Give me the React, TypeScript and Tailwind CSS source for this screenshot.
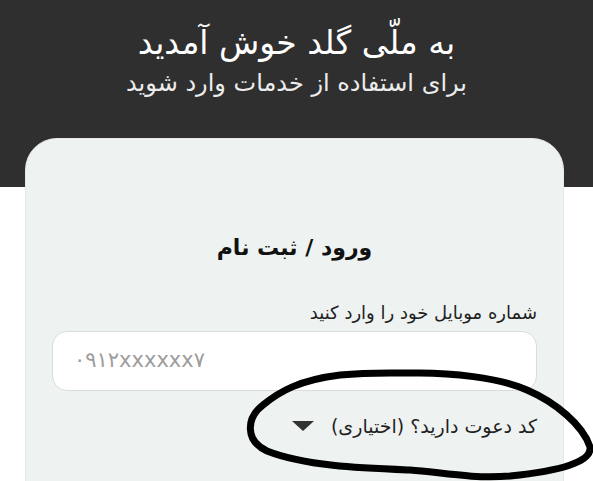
export default function App() {
  return (
    <div
      className="relative h-screen w-full overflow-hidden bg-white"
      style={{ fontFamily: '"DejaVu Sans", sans-serif' }}
    >
      {/* header */}
      <div className="flex h-[187px] flex-col items-center bg-[#2f2f2f] pt-[21px] text-center" dir="rtl">
        <h1 className="text-[33px] leading-[44px] text-white">به ملّی گلد خوش آمدید</h1>
        <p className="mt-[2px] text-[24px] leading-[32px] text-[#ececec]">برای استفاده از خدمات وارد شوید</p>
      </div>

      {/* card */}
      <div
        className="relative ml-[25px] -mt-[49px] h-[400px] w-[539px] rounded-[32px] border border-[#e4e8e7] bg-[#eef2f1] px-[26px] pt-[92px]"
        dir="rtl"
      >
        <h2 className="text-center text-[22px] font-bold leading-[34px] text-[#111]">ورود / ثبت نام</h2>

        <label className="mt-[35px] block text-[18px] leading-[26px] text-[#1f1f1f]">
          شماره موبایل خود را وارد کنید
        </label>
        <div className="mt-[5px] flex h-[60px] items-center rounded-[15px] border border-[#d9dcdc] bg-white px-[21px]">
          <input
            dir="ltr"
            placeholder="۰۹۱۲xxxxxx۷"
            className="w-full bg-transparent text-left text-[21px] text-[#333] outline-none placeholder:text-[#9d9d9d]"
          />
        </div>

        <button className="mt-[21px] flex items-center gap-[16px] text-[19px] leading-[28px] text-[#1f1f1f]">
          <span>کد دعوت دارید؟ (اختیاری)</span>
          <svg width="24" height="11" viewBox="0 0 24 11">
            <path d="M1 0 H23 L12 10 Z" fill="#333" />
          </svg>
        </button>
      </div>

      {/* hand-drawn annotation */}
      <svg
        className="pointer-events-none absolute left-0 top-0"
        width="593"
        height="481"
        viewBox="0 0 593 481"
      >
        <path
          d="M410,373 C450,372 500,378 527,390 C555,402 583,425 590,447 C592,462 560,471 510,476 C470,479 440,472 410,470 C360,468 305,466 267,451 C245,441 246,418 263,405 C280,391 300,380 340,375 C370,372 390,373 410,373 Z"
          fill="none"
          stroke="#000"
          strokeWidth="7"
          strokeLinejoin="round"
        />
      </svg>
    </div>
  );
}
